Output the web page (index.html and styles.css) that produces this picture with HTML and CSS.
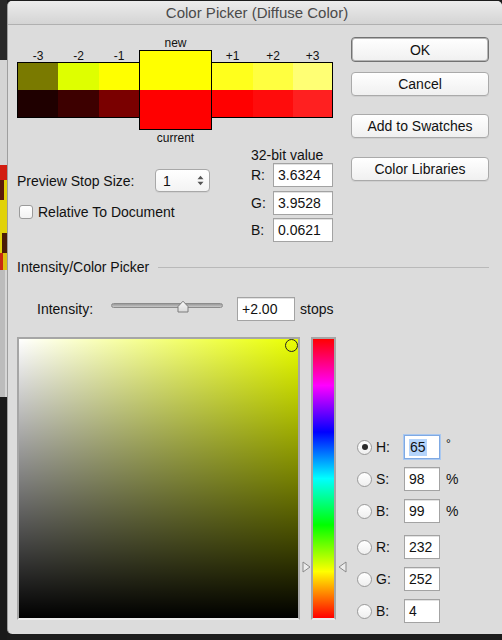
FILE: index.html
```html
<!DOCTYPE html>
<html>
<head>
<meta charset="utf-8">
<link rel="stylesheet" href="styles.css">
</head>
<body>
<div class="desk">
  <div class="strip">
    <div class="sa"></div><div class="sb"></div><div class="sc"></div><div class="sd"></div>
    <div class="se"></div><div class="sf"></div><div class="sg"></div><div class="sh"></div><div class="si"></div>
  </div>
  <div class="win">
    <div class="titlebar">Color Picker (Diffuse Color)</div>
    <div class="content">
      <div class="top">
        <div class="left">
          <div class="swatches">
            <div class="sgroup lg">
              <div class="slabels"><span class="w40">-3</span><span class="w41">-2</span><span class="w40">-1</span></div>
              <div class="srows">
                <div class="srow"><i class="w40" style="background:#7a7a00"></i><i class="w41" style="background:#deff00"></i><i class="w40" style="background:#ffff00"></i></div>
                <div class="srow"><i class="w40" style="background:#1f0000"></i><i class="w41" style="background:#3d0000"></i><i class="w40" style="background:#7a0000"></i></div>
              </div>
            </div>
            <div class="scenter">
              <div class="clabel">new</div>
              <div class="bigbox"><div class="bnew"></div><div class="bcur"></div></div>
              <div class="clabel cur">current</div>
            </div>
            <div class="sgroup rg">
              <div class="slabels"><span class="w41">+1</span><span class="w40">+2</span><span class="w39">+3</span></div>
              <div class="srows">
                <div class="srow"><i class="w41" style="background:#ffff1c"></i><i class="w40" style="background:#ffff40"></i><i class="w39" style="background:#ffff74"></i></div>
                <div class="srow"><i class="w41" style="background:#ff0000"></i><i class="w40" style="background:#ff0c0c"></i><i class="w39" style="background:#ff2020"></i></div>
              </div>
            </div>
          </div>
          <div class="opts">
            <div class="preview">
              <div class="prow">
                <span class="plabel">Preview Stop Size:</span>
                <div class="select"><span>1</span>
                  <svg width="7" height="11" viewBox="0 0 7 11"><path d="M0.5 4.2 L3.5 0.8 L6.5 4.2 Z M0.5 6.8 L3.5 10.2 L6.5 6.8 Z" fill="#555"/></svg>
                </div>
              </div>
              <div class="chk"><span class="cbox"></span><span>Relative To Document</span></div>
            </div>
            <div class="bits">
              <div class="btitle">32-bit value</div>
              <div class="brow"><span>R:</span><div class="inp bw">3.6324</div></div>
              <div class="brow"><span>G:</span><div class="inp bw">3.9528</div></div>
              <div class="brow"><span>B:</span><div class="inp bw">0.0621</div></div>
            </div>
          </div>
        </div>
        <div class="buttons">
          <div class="btn ok">OK</div>
          <div class="btn cancel">Cancel</div>
          <div class="btn add">Add to Swatches</div>
          <div class="btn lib">Color Libraries</div>
        </div>
      </div>
      <div class="ghead"><span>Intensity/Color Picker</span><div class="rule"></div></div>
      <div class="intensity">
        <span class="ilabel">Intensity:</span>
        <div class="slider">
          <div class="track"></div>
          <svg class="thumb" width="12" height="13" viewBox="0 0 12 13">
            <defs><linearGradient id="tg" x1="0" y1="0" x2="0" y2="1"><stop offset="0" stop-color="#fafafa"/><stop offset="1" stop-color="#d8d8d8"/></linearGradient></defs>
            <path d="M1 12 V6.5 L6 1.2 L11 6.5 V12 Z" fill="url(#tg)" stroke="#7c7c7c" stroke-width="1" stroke-linejoin="round"/>
          </svg>
        </div>
        <div class="inp iw">+2.00</div>
        <span class="stops">stops</span>
      </div>
      <div class="picker">
        <div class="field"><div class="marker"></div></div>
        <div class="huewrap">
          <div class="hue"></div>
          <svg class="arr al" width="9" height="12" viewBox="0 0 9 12"><path d="M1 1 L8 6 L1 11 Z" fill="#ececec" stroke="#8a8a8a" stroke-width="1" stroke-linejoin="round"/></svg>
          <svg class="arr ar" width="9" height="12" viewBox="0 0 9 12"><path d="M8 1 L1 6 L8 11 Z" fill="#ececec" stroke="#8a8a8a" stroke-width="1" stroke-linejoin="round"/></svg>
        </div>
        <div class="fields">
          <div class="frow"><span class="radio on"></span><span class="flabel">H:</span><div class="inp fw focus"><span class="sel">65</span></div><span class="unit deg">°</span></div>
          <div class="frow"><span class="radio"></span><span class="flabel">S:</span><div class="inp fw">98</div><span class="unit">%</span></div>
          <div class="frow"><span class="radio"></span><span class="flabel">B:</span><div class="inp fw">99</div><span class="unit">%</span></div>
          <div class="frow rgb"><span class="radio"></span><span class="flabel">R:</span><div class="inp fw">232</div></div>
          <div class="frow"><span class="radio"></span><span class="flabel">G:</span><div class="inp fw">252</div></div>
          <div class="frow"><span class="radio"></span><span class="flabel">B:</span><div class="inp fw">4</div></div>
        </div>
      </div>
    </div>
  </div>
</div>
</body>
</html>
```

FILE: styles.css
```css
* { box-sizing: border-box; }
html, body { margin: 0; padding: 0; }
body {
  background: #1c1c1c;
  font-family: "Liberation Sans", Arial, sans-serif;
  color: #111;
  width: 502px;
  height: 640px;
  overflow: hidden;
  font-size: 14px;
}
.desk { display: flex; align-items: flex-start; }
.strip { width: 7px; display: flex; flex-direction: column; flex-shrink: 0; }
.sa { height: 60px; background: #282828; }
.sb { height: 105px; background: #d4d4d4; }
.sc { height: 15px; background: #d21c10; }
.sd { height: 20px; background: linear-gradient(to right, #5a1a08 0 55%, #e0cf08 55%); }
.se { height: 33px; background: #e1d20a; }
.sf { height: 20px; background: linear-gradient(to right, #e1d20a 0 35%, #4a1c06 35%); }
.sg { height: 17px; background: linear-gradient(to right, #c82a10 0 40%, #dcc010 40%); }
.sh { height: 127px; background: linear-gradient(to right, #bcbcbc 0 70%, #d6d6d6 70%); }
.si { height: 243px; background: #1a1a1a; }

.win {
  width: 495px;
  height: 633px;
  margin-top: 1px;
  background: #dcdcdc;
  border-left: 1px solid #9e9e9e;
  border-radius: 5px 5px 0 5px;
  overflow: hidden;
  flex-shrink: 0;
}
.titlebar {
  height: 24px;
  line-height: 23px;
  text-align: center;
  font-size: 15px;
  color: #4a4a4a;
  background: linear-gradient(#ececec, #d4d4d4);
  border-bottom: 1px solid #b0b0b0;
  padding-left: 4px;
}
.content { padding: 11px 0 0 9px; }

.top { display: flex; align-items: flex-start; gap: 18px; }
.left { width: 316px; }

.swatches { display: flex; align-items: flex-start; height: 109px; }
.sgroup { padding-top: 14px; }
.lg { width: 122px; }
.rg { width: 121px; }
.slabels { display: flex; height: 12px; font-size: 12px; line-height: 12px; text-align: center; }
.lg .slabels { padding-left: 1px; }
.srows { border-top: 1px solid #000; border-bottom: 1px solid #000; }
.lg .srows { border-left: 1px solid #000; }
.rg .srows { border-right: 1px solid #000; }
.srow { display: flex; height: 27px; }
.srow i { display: block; height: 27px; }
.w39 { width: 39px; } .w40 { width: 40px; } .w41 { width: 41px; }
.scenter { width: 73px; }
.clabel { height: 14px; line-height: 14px; font-size: 12px; text-align: center; }
.clabel.cur { margin-top: 1px; }
.bigbox { height: 80px; border: 1px solid #000; }
.bnew { height: 39px; background: #ffff00; }
.bcur { height: 39px; background: #ff0000; }

.opts { display: flex; }
.preview { width: 234px; padding-top: 24px; }
.prow { display: flex; align-items: center; height: 23px; }
.plabel { width: 138px; }
.select {
  width: 55px; height: 23px;
  border: 1px solid #a8a8a8; border-radius: 4px;
  background: linear-gradient(#ffffff, #f3f3f3);
  display: flex; align-items: center; justify-content: space-between;
  padding: 0 5px 0 7px;
  box-shadow: 0 1px 0 rgba(0,0,0,0.05);
}
.chk { margin-top: 12px; display: flex; align-items: center; height: 15px; gap: 5px; padding-left: 2px; }
.cbox { width: 14px; height: 14px; border: 1px solid #9b9b9b; border-radius: 3px; background: linear-gradient(#fff, #f2f2f2); }

.bits { width: 82px; padding-top: 2px; display: flex; flex-direction: column; gap: 3.5px; }
.btitle { height: 16px; line-height: 16px; margin-bottom: -3.5px; }
.brow { display: flex; align-items: center; justify-content: space-between; height: 24px; }
.inp {
  height: 24px;
  background: #fff;
  border: 1px solid #a3a3a3;
  box-shadow: inset 0 1px 0 #e2e2e2;
  display: flex; align-items: center;
  padding-left: 4px;
  color: #111;
}
.bw { width: 60px; }

.buttons { width: 138px; margin-top: 1px; }
.btn {
  height: 24px;
  border: 1px solid #aaaaaa;
  border-radius: 4px;
  background: linear-gradient(#ffffff, #f0f0f0);
  display: flex; align-items: center; justify-content: center;
  box-shadow: 0 1px 0 rgba(0,0,0,0.06);
}
.ok { height: 25px; border-color: #727272; box-shadow: inset 0 0 0 1px #b5b5b5; }
.cancel { margin-top: 10px; }
.add { margin-top: 18px; }
.lib { margin-top: 19px; }

.ghead { margin-top: 17px; display: flex; align-items: center; height: 16px; }
.rule { flex: 1; height: 1px; background: #b9b9b9; margin: 0 13px 0 9px; }

.intensity { margin-top: 22px; height: 24px; display: flex; align-items: center; padding-left: 20px; }
.ilabel { width: 74px; }
.slider { width: 112px; height: 24px; position: relative; }
.track {
  margin-top: 6px; height: 5px; border-radius: 3px;
  background: linear-gradient(#9a9a9a, #c8c8c8);
  border: 1px solid #8c8c8c;
}
.thumb { position: absolute; left: 66px; top: 3px; }
.iw { width: 58px; margin-left: 14px; }
.stops { margin-left: 5px; }

.picker { margin-top: 16px; display: flex; align-items: flex-start; }
.field {
  width: 283px; height: 283px;
  border: 2px solid #a6a6a6;
  border-bottom-color: #ededed;
  background: linear-gradient(to top, #000 0%, rgba(0,0,0,0) 100%), linear-gradient(to right, #ffffff, #eaff00);
  position: relative;
}
.marker {
  position: absolute; left: 266px; top: 0;
  width: 13px; height: 13px; border-radius: 50%;
  border: 1.5px solid #222;
}
.huewrap { width: 47px; height: 283px; padding: 0 11px; position: relative; }
.hue {
  width: 25px; height: 283px;
  border: 2px solid #a6a6a6;
  border-bottom-color: #ededed;
  background: linear-gradient(#ff0000 0%, #ff00ff 16.67%, #0000ff 33.33%, #00ffff 50%, #00ff00 66.67%, #ffff00 83.33%, #ff0000 100%);
}
.arr { position: absolute; top: 224px; }
.al { left: 2px; }
.ar { left: 38px; }

.fields { margin-left: 10px; margin-top: 98px; display: flex; flex-direction: column; gap: 8px; }
.frow { display: flex; align-items: center; height: 24px; }
.frow.rgb { margin-top: 4px; }
.radio {
  width: 15px; height: 15px; border-radius: 50%;
  border: 1px solid #9a9a9a;
  background: linear-gradient(#ffffff, #efefef);
  display: flex; align-items: center; justify-content: center;
}
.radio.on::after { content: ""; width: 6px; height: 6px; border-radius: 50%; background: #2b2b2b; }
.flabel { width: 28px; margin-left: 4px; }
.fw { width: 36px; }
.focus { border: 1px solid #7fa9e3; box-shadow: 0 0 0 1px #a9c8f0; }
.sel { background: #b4d4fb; padding: 0 1px; line-height: 17px; }
.unit { margin-left: 6px; }
.deg { font-size: 12px; margin-top: -6px; }
```
